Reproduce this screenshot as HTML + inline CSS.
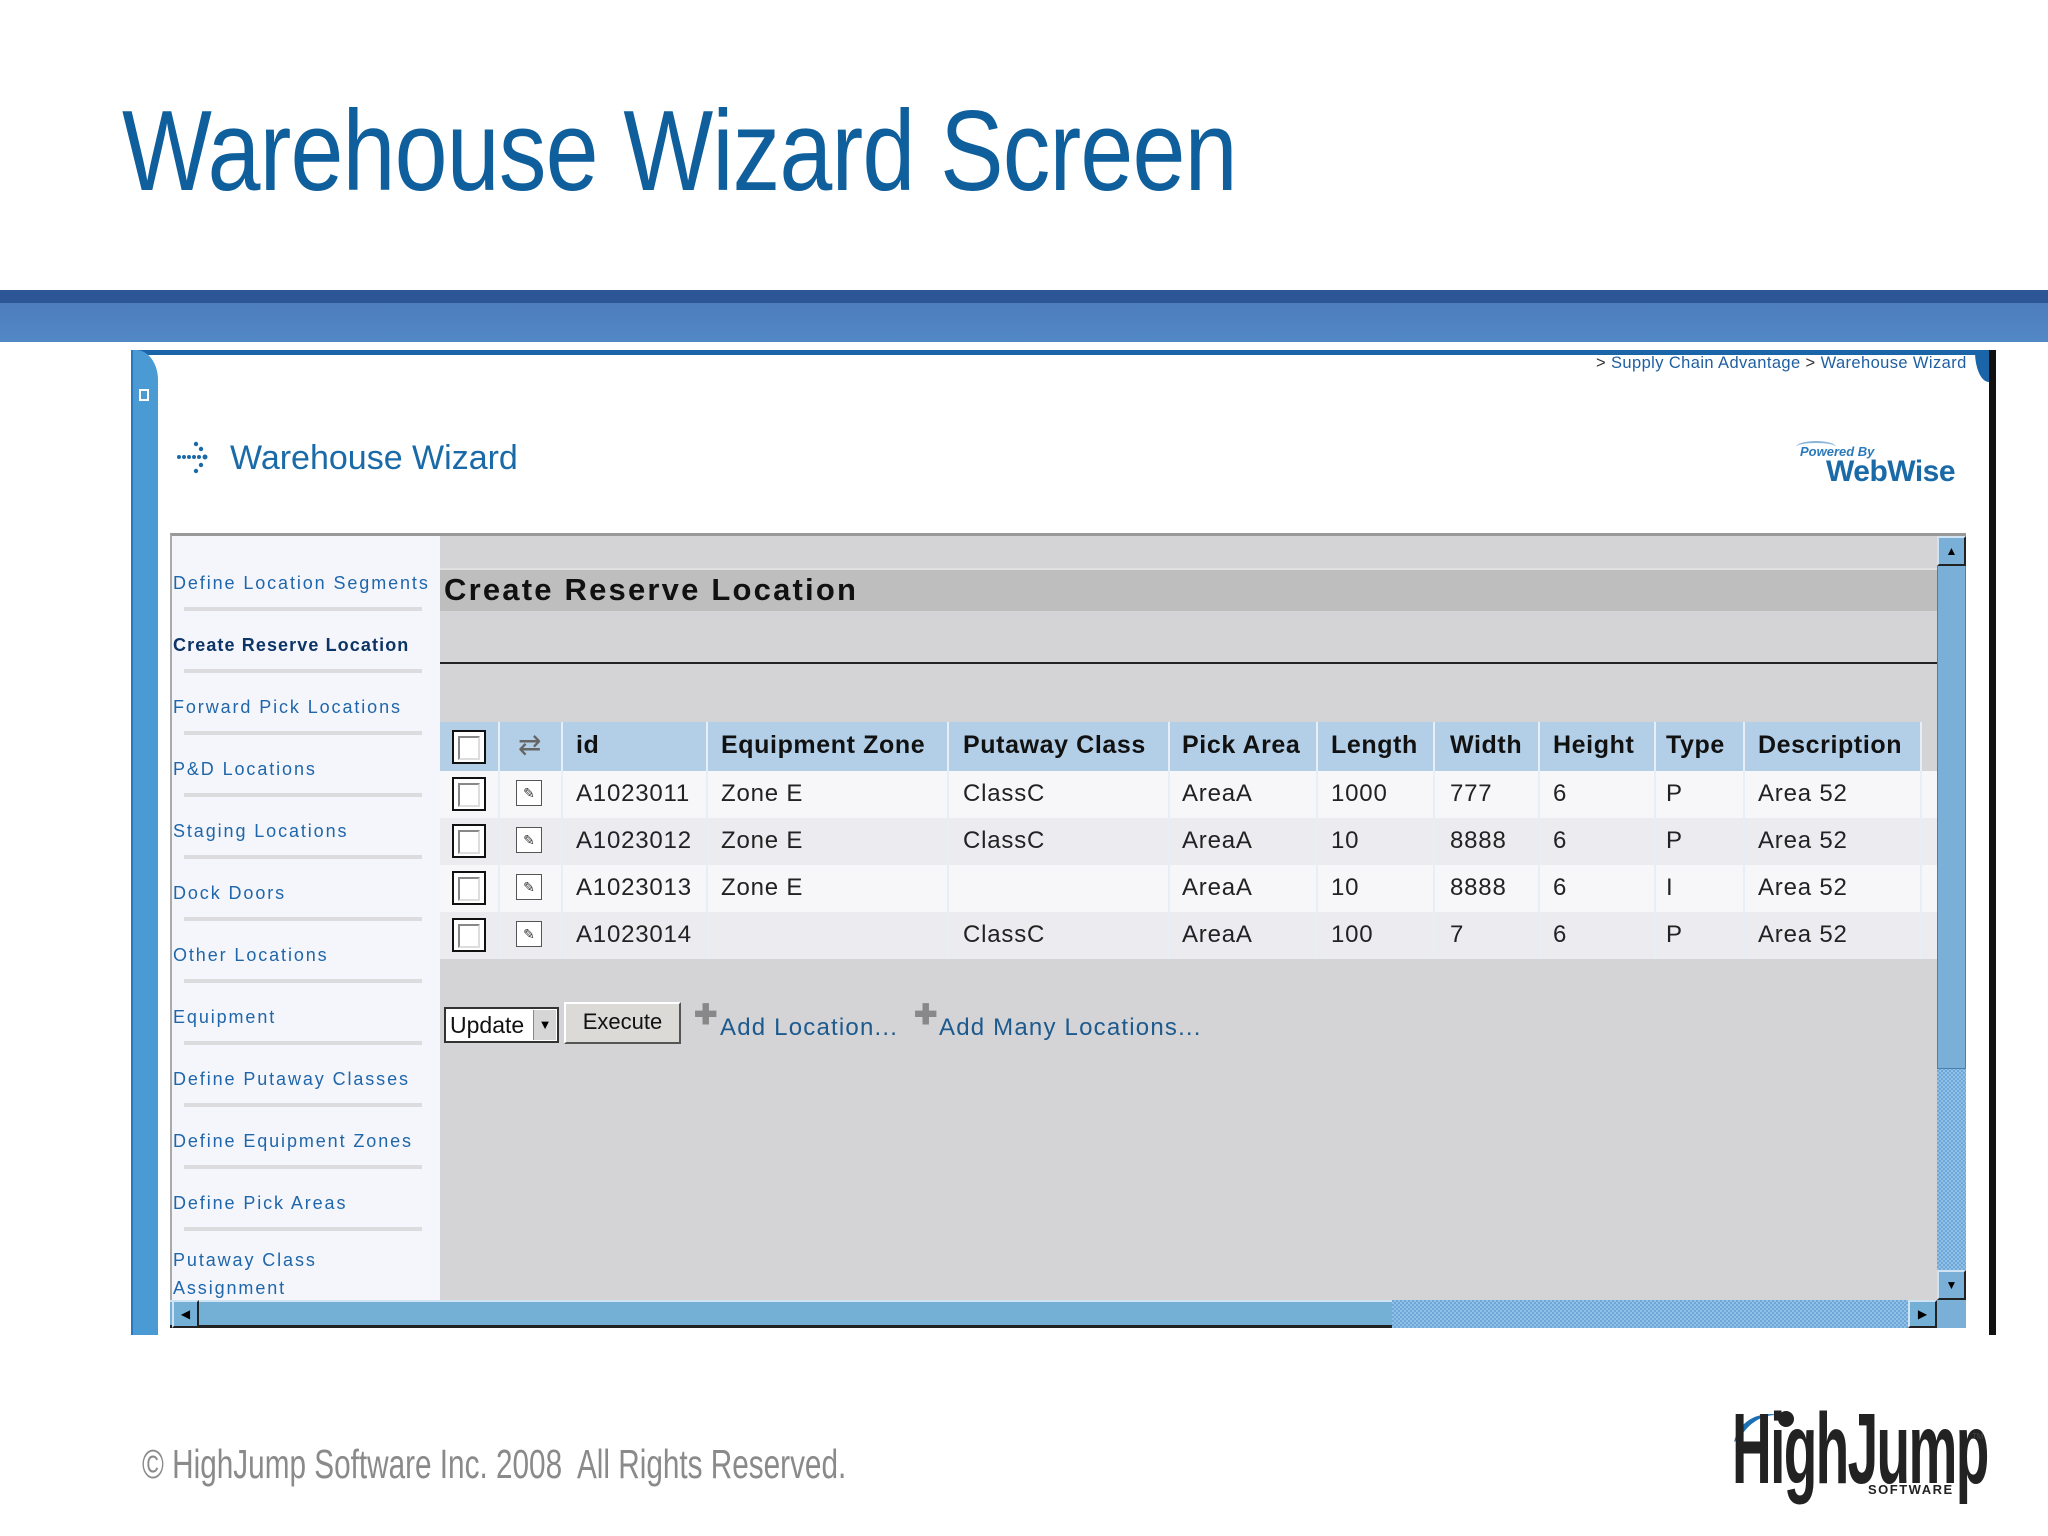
<!DOCTYPE html>
<html><head><meta charset="utf-8"><style>
*{margin:0;padding:0;box-sizing:border-box}
body{width:2048px;height:1536px;background:#fff;position:relative;overflow:hidden;font-family:"Liberation Sans",sans-serif}
.a{position:absolute}
.title{left:122px;top:86px;font-size:114px;color:#0f5f9c;white-space:nowrap;transform:scaleX(0.835);transform-origin:left top;letter-spacing:-1px}
.nav{position:absolute;left:173px;font-size:18px;color:#1f66aa;letter-spacing:1.9px;white-space:nowrap}
.sep{position:absolute;left:184px;width:238px;height:4px;background:#dcdcdf}
.th{position:absolute;top:731px;font-size:25px;font-weight:bold;color:#111;white-space:nowrap;letter-spacing:.6px}
.td{position:absolute;font-size:24px;color:#222;white-space:nowrap;letter-spacing:.8px}
.vl{position:absolute;width:2px;background:#e8eef6}
.cb{position:absolute;left:452px;width:34px;height:34px;border:2px solid #111;background:#fff}
.cb:after{content:"";position:absolute;left:4px;top:4px;width:18px;height:20px;border:2px solid #888;border-right-color:#ddd;border-bottom-color:#ddd}
.ed{position:absolute;left:516px;width:26px;height:26px;border:1px solid #555;background:#fff;font-size:14px;text-align:center;line-height:24px;color:#333}
.chk{background-color:#8fc0e6;background-image:linear-gradient(45deg,#6fa8d8 25%,transparent 25%,transparent 75%,#6fa8d8 75%),linear-gradient(45deg,#6fa8d8 25%,transparent 25%,transparent 75%,#6fa8d8 75%);background-size:4px 4px;background-position:0 0,2px 2px}
</style></head><body>
<div class="a title">Warehouse Wizard Screen</div>

<div class="a" style="left:0;top:290px;width:2048px;height:13px;background:#2d5696"></div>
<div class="a" style="left:0;top:303px;width:2048px;height:39px;background:linear-gradient(#4d7dbd,#5288c6)"></div>

<div class="a" style="left:131px;top:350px;width:1865px;height:985px;background:#fff"></div>
<div class="a" style="left:131px;top:350px;width:1858px;height:5px;background:#1a64a8"></div>
<div class="a" style="left:131px;top:350px;width:27px;height:985px;background:#4a9bd4;border-top-right-radius:22px 30px;border-left:2px solid #2a78bd"></div>
<div class="a" style="left:139px;top:389px;width:10px;height:12px;border:2px solid #fff"></div>
<div class="a" style="left:1989px;top:350px;width:7px;height:985px;background:#111"></div>
<div class="a" style="left:1975px;top:352px;width:14px;height:30px;background:#1a64a8;border-bottom-left-radius:14px 30px"></div>

<div class="a" style="left:1596px;top:354px;font-size:16.5px;color:#1f5fa0;white-space:nowrap;letter-spacing:.4px"><span style="color:#333">&gt;</span> Supply Chain Advantage <span style="color:#333">&gt;</span> Warehouse Wizard</div>

<svg class="a" style="left:176px;top:440px" width="40" height="36" viewBox="0 0 40 36"><g fill="#1b6aa8"><circle cx="3" cy="17" r="2"/><circle cx="8" cy="17" r="2"/><circle cx="13" cy="17" r="2"/><circle cx="18" cy="17" r="2"/><circle cx="23" cy="17" r="2"/><circle cx="20" cy="4" r="2.2"/><circle cx="25" cy="9" r="2.2"/><circle cx="29" cy="17" r="2.5"/><circle cx="25" cy="25" r="2.2"/><circle cx="20" cy="31" r="2.2"/></g></svg>
<div class="a" style="left:230px;top:439px;font-size:34px;color:#1a6aa8;white-space:nowrap;letter-spacing:0">Warehouse Wizard</div>

<div class="a" style="left:1800px;top:444px;font-size:13px;font-style:italic;font-weight:bold;color:#2a7abb;white-space:nowrap">Powered By</div>
<div class="a" style="left:1826px;top:455px;font-size:30px;font-weight:bold;color:#1a6aa8;white-space:nowrap;letter-spacing:-.5px">WebWise</div>
<div class="a" style="left:1796px;top:441px;width:40px;height:12px;border-top:2px solid #8ab4d8;border-radius:50%"></div>

<div class="a" style="left:170px;top:533px;width:1796px;height:795px;border-top:3px solid #999;border-left:2px solid #aaa;background:#d4d3d6"></div>
<div class="a" style="left:172px;top:536px;width:268px;height:764px;background:#f5f6fb"></div>
<div class="a" style="left:440px;top:568px;width:1497px;height:43px;background:#bebebe;border-top:2px solid #e0e0e0"></div>
<div class="a" style="left:444px;top:572px;font-size:31px;font-weight:bold;color:#111;white-space:nowrap;letter-spacing:2.2px">Create Reserve Location</div>
<div class="a" style="left:440px;top:662px;width:1497px;height:2px;background:#222"></div>

<div class="nav" style="top:573px">Define Location Segments</div><div class="sep" style="top:607px"></div>
<div class="nav" style="top:635px;color:#0d3466;font-weight:bold;letter-spacing:1.1px">Create Reserve Location</div><div class="sep" style="top:669px"></div>
<div class="nav" style="top:697px">Forward Pick Locations</div><div class="sep" style="top:731px"></div>
<div class="nav" style="top:759px">P&amp;D Locations</div><div class="sep" style="top:793px"></div>
<div class="nav" style="top:821px">Staging Locations</div><div class="sep" style="top:855px"></div>
<div class="nav" style="top:883px">Dock Doors</div><div class="sep" style="top:917px"></div>
<div class="nav" style="top:945px">Other Locations</div><div class="sep" style="top:979px"></div>
<div class="nav" style="top:1007px">Equipment</div><div class="sep" style="top:1041px"></div>
<div class="nav" style="top:1069px">Define Putaway Classes</div><div class="sep" style="top:1103px"></div>
<div class="nav" style="top:1131px">Define Equipment Zones</div><div class="sep" style="top:1165px"></div>
<div class="nav" style="top:1193px">Define Pick Areas</div><div class="sep" style="top:1227px"></div>
<div class="nav" style="top:1246px;line-height:28px">Putaway Class<br>Assignment</div>

<div class="a" style="left:440px;top:722px;width:1480px;height:49px;background:#b3cfe8"></div>
<div class="a" style="left:440px;top:771px;width:1497px;height:47px;background:#f7f7fa"></div>
<div class="a" style="left:440px;top:818px;width:1497px;height:47px;background:#ececf0"></div>
<div class="a" style="left:440px;top:865px;width:1497px;height:47px;background:#f7f7fa"></div>
<div class="a" style="left:440px;top:912px;width:1497px;height:47px;background:#ececf0"></div>
<div class="vl" style="left:498px;top:722px;height:237px"></div>
<div class="vl" style="left:561px;top:722px;height:237px"></div>
<div class="vl" style="left:706px;top:722px;height:237px"></div>
<div class="vl" style="left:947px;top:722px;height:237px"></div>
<div class="vl" style="left:1168px;top:722px;height:237px"></div>
<div class="vl" style="left:1316px;top:722px;height:237px"></div>
<div class="vl" style="left:1433px;top:722px;height:237px"></div>
<div class="vl" style="left:1538px;top:722px;height:237px"></div>
<div class="vl" style="left:1654px;top:722px;height:237px"></div>
<div class="vl" style="left:1743px;top:722px;height:237px"></div>
<div class="vl" style="left:1920px;top:722px;height:237px"></div>

<div class="cb" style="top:730px"></div>
<div class="a" style="left:518px;top:728px;font-size:28px;color:#666">⇄</div>
<div class="th" style="left:576px">id</div>
<div class="th" style="left:721px">Equipment Zone</div>
<div class="th" style="left:963px">Putaway Class</div>
<div class="th" style="left:1182px">Pick Area</div>
<div class="th" style="left:1331px">Length</div>
<div class="th" style="left:1450px">Width</div>
<div class="th" style="left:1553px">Height</div>
<div class="th" style="left:1666px">Type</div>
<div class="th" style="left:1758px">Description</div>

<div class="cb" style="top:777px"></div><div class="ed" style="top:780px">✎</div>
<div class="cb" style="top:824px"></div><div class="ed" style="top:827px">✎</div>
<div class="cb" style="top:871px"></div><div class="ed" style="top:874px">✎</div>
<div class="cb" style="top:918px"></div><div class="ed" style="top:921px">✎</div>

<div class="td" style="left:576px;top:780px">A1023011</div><div class="td" style="left:721px;top:780px">Zone E</div><div class="td" style="left:963px;top:780px">ClassC</div><div class="td" style="left:1182px;top:780px">AreaA</div><div class="td" style="left:1331px;top:780px">1000</div><div class="td" style="left:1450px;top:780px">777</div><div class="td" style="left:1553px;top:780px">6</div><div class="td" style="left:1666px;top:780px">P</div><div class="td" style="left:1758px;top:780px">Area 52</div>
<div class="td" style="left:576px;top:827px">A1023012</div><div class="td" style="left:721px;top:827px">Zone E</div><div class="td" style="left:963px;top:827px">ClassC</div><div class="td" style="left:1182px;top:827px">AreaA</div><div class="td" style="left:1331px;top:827px">10</div><div class="td" style="left:1450px;top:827px">8888</div><div class="td" style="left:1553px;top:827px">6</div><div class="td" style="left:1666px;top:827px">P</div><div class="td" style="left:1758px;top:827px">Area 52</div>
<div class="td" style="left:576px;top:874px">A1023013</div><div class="td" style="left:721px;top:874px">Zone E</div><div class="td" style="left:1182px;top:874px">AreaA</div><div class="td" style="left:1331px;top:874px">10</div><div class="td" style="left:1450px;top:874px">8888</div><div class="td" style="left:1553px;top:874px">6</div><div class="td" style="left:1666px;top:874px">I</div><div class="td" style="left:1758px;top:874px">Area 52</div>
<div class="td" style="left:576px;top:921px">A1023014</div><div class="td" style="left:963px;top:921px">ClassC</div><div class="td" style="left:1182px;top:921px">AreaA</div><div class="td" style="left:1331px;top:921px">100</div><div class="td" style="left:1450px;top:921px">7</div><div class="td" style="left:1553px;top:921px">6</div><div class="td" style="left:1666px;top:921px">P</div><div class="td" style="left:1758px;top:921px">Area 52</div>

<div class="a" style="left:444px;top:1007px;width:115px;height:36px;background:#fff;border:2px solid #333;font-size:23px;line-height:32px;padding-left:4px;color:#111">Update</div>
<div class="a" style="left:533px;top:1010px;width:23px;height:30px;background:#d6d6d6;border-left:1px solid #888;font-size:13px;text-align:center;line-height:30px">▼</div>
<div class="a" style="left:564px;top:1002px;width:117px;height:42px;background:#dcdad6;border:2px solid #fff;border-right-color:#555;border-bottom-color:#555;font-size:22px;line-height:36px;text-align:center;color:#111">Execute</div>
<div class="a" style="left:694px;top:998px;font-size:28px;font-weight:bold;color:#888">✚</div>
<div class="a" style="left:720px;top:1014px;font-size:24px;color:#1c5a8e;white-space:nowrap;letter-spacing:1.2px">Add Location...</div>
<div class="a" style="left:914px;top:998px;font-size:28px;font-weight:bold;color:#888">✚</div>
<div class="a" style="left:939px;top:1014px;font-size:24px;color:#1c5a8e;white-space:nowrap;letter-spacing:1.2px">Add Many Locations...</div>

<div class="a chk" style="left:1937px;top:536px;width:29px;height:764px"></div>
<div class="a" style="left:1937px;top:536px;width:29px;height:533px;background:#7aafd8;border:1px solid #4a7fb0"></div>
<div class="a" style="left:1937px;top:536px;width:29px;height:30px;background:#7aafd8;border:2px solid #cfe3f3;border-right-color:#222;border-bottom-color:#222;font-size:12px;text-align:center;line-height:26px">▲</div>
<div class="a" style="left:1937px;top:1270px;width:29px;height:30px;background:#7aafd8;border:2px solid #cfe3f3;border-right-color:#222;border-bottom-color:#222;font-size:12px;text-align:center;line-height:26px">▼</div>
<div class="a chk" style="left:170px;top:1300px;width:1796px;height:28px"></div>
<div class="a" style="left:170px;top:1300px;width:1222px;height:28px;background:#74b0d6;border-top:2px solid #cfe3f3;border-bottom:3px solid #222"></div>
<div class="a" style="left:172px;top:1300px;width:27px;height:28px;background:#74b0d6;border:2px solid #cfe3f3;border-right-color:#222;border-bottom-color:#222;font-size:12px;line-height:24px;text-align:center">◀</div>
<div class="a" style="left:1908px;top:1300px;width:29px;height:28px;background:#74b0d6;border:2px solid #cfe3f3;border-right-color:#222;border-bottom-color:#222;font-size:12px;line-height:24px;text-align:center">▶</div>
<div class="a" style="left:1937px;top:1300px;width:29px;height:28px;background:#7aafd8"></div>

<div class="a" style="left:142px;top:1441px;font-size:41px;color:#8a8a8a;white-space:nowrap;transform:scaleX(0.725);transform-origin:left top">© HighJump Software Inc. 2008&nbsp; All Rights Reserved.</div>

<svg class="a" style="left:1728px;top:1404px" width="262" height="100" viewBox="0 0 262 100">
<path d="M6 38 C12 14 34 6 56 12 C40 8 22 16 12 34 Z" fill="#1b6fb5"/>
<circle cx="58" cy="15" r="8" fill="#222"/>
</svg>
<div class="a" style="left:1732px;top:1392px;font-size:100px;font-weight:bold;color:#222;white-space:nowrap;transform:scaleX(0.55);transform-origin:left top;letter-spacing:-3px">HighJump</div>
<div class="a" style="left:1868px;top:1482px;font-size:13px;font-weight:bold;color:#222;letter-spacing:1.5px">SOFTWARE</div>
<div class="a" style="left:1972px;top:1432px;font-size:8px;color:#444">TM</div>
</body></html>
